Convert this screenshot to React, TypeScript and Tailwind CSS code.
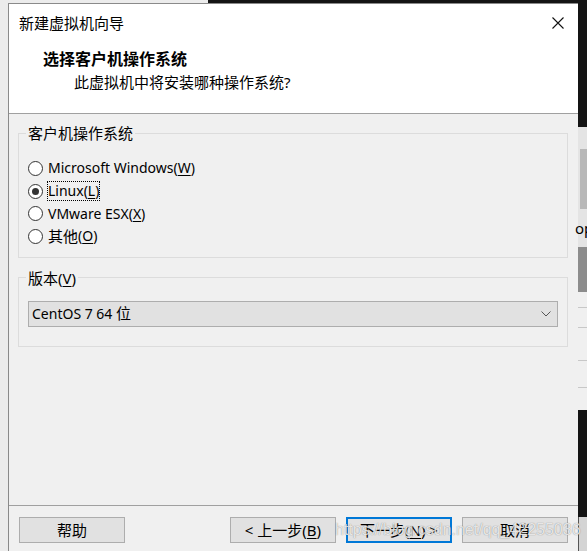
import type { ReactNode } from "react";

const FONT = "font-['Noto_Sans','Noto_Sans_CJK_SC',sans-serif]";

function Radio({
  checked,
  focused,
  children,
}: {
  checked?: boolean;
  focused?: boolean;
  children: ReactNode;
}) {
  return (
    <div className="flex h-[22.7px] items-center">
      <span className="ml-[9px] flex h-[15px] w-[15px] items-center justify-center rounded-full border border-[#333] bg-white">
        {checked && <span className="h-[7px] w-[7px] rounded-full bg-[#333]" />}
      </span>
      <span
        className={
          "ml-[4px] flex h-[20px] items-center border text-[14px] leading-[18px] text-black " +
          (focused ? "border-dotted border-black" : "border-transparent")
        }
      >
        {children}
      </span>
    </div>
  );
}

function Button({
  primary,
  children,
}: {
  primary?: boolean;
  children: ReactNode;
}) {
  return (
    <button
      className={
        "flex h-[26px] w-[106px] items-center justify-center bg-[#e1e1e1] text-[15px] leading-[18px] text-black " +
        (primary ? "border-2 border-[#0078d7]" : "border border-[#adadad]")
      }
    >
      {children}
    </button>
  );
}

export default function App() {
  return (
    <div className={`relative flex h-[551px] w-[587px] overflow-hidden bg-[#141414] ${FONT}`}>
      <div className="flex w-[578px] flex-col">
        {/* strip of the window behind */}
        <div className="flex h-[3px]">
          <div className="w-[208px] bg-[#ececec]" />
          <div className="flex-1 bg-[#141414]" />
        </div>

        <div className="flex flex-1">
          <div className="w-[8px] bg-[#ececec]" />

          {/* dialog */}
          <div className="flex flex-1 flex-col border-l border-t border-[#8a8a8a] bg-[#f0f0f0]">
            {/* header */}
            <div className="flex h-[110px] flex-col border-b border-[#a0a0a0] bg-white">
              <div className="flex h-[37px] items-center justify-between pl-[10px] pr-[14px]">
                <span className="text-[15px] leading-[20px] text-black">新建虚拟机向导</span>
                <svg width="12" height="12" viewBox="0 0 12 12">
                  <path d="M0.5 0.5 L11.5 11.5 M11.5 0.5 L0.5 11.5" stroke="#111" strokeWidth="1.1" />
                </svg>
              </div>
              <div className="mt-[8px] pl-[34px] text-[16px] font-bold leading-[20px] text-black">
                选择客户机操作系统
              </div>
              <div className="mt-[3px] pl-[65px] text-[15px] leading-[20px] text-black">
                此虚拟机中将安装哪种操作系统?
              </div>
            </div>

            {/* body */}
            <div className="flex flex-1 flex-col pl-[9px] pr-[10px]">
              <fieldset className="mt-[9px] border border-[#dcdcdc] pb-[9px] pt-[14px]">
                <legend className="ml-[7px] px-[2px] text-[15px] leading-[20px] text-black">
                  客户机操作系统
                </legend>
                <Radio>
                  Microsoft Windows(<u className="underline-offset-2">W</u>)
                </Radio>
                <Radio checked focused>
                  Linux(<u className="underline-offset-2">L</u>)
                </Radio>
                <Radio>
                  VMware ESX(<u className="underline-offset-2">X</u>)
                </Radio>
                <Radio>
                  <span className="text-[15px]">其他</span>(<u className="underline-offset-2">O</u>)
                </Radio>
              </fieldset>

              <fieldset className="mt-[10px] border border-[#dcdcdc] px-[9px] pb-[19px] pt-[13px]">
                <legend className="ml-[-2px] px-[2px] text-[15px] leading-[20px] text-black">
                  版本(<u className="underline-offset-2">V</u>)
                </legend>
                <div className="flex h-[26px] items-center justify-between border border-[#adadad] bg-[#e1e1e1] pl-[3px] pr-[6px]">
                  <span className="text-[14px] leading-[20px] text-black">
                    CentOS 7 64 <span className="text-[15px]">位</span>
                  </span>
                  <svg width="10" height="6" viewBox="0 0 10 6">
                    <polyline points="0.5,0.5 5,5 9.5,0.5" fill="none" stroke="#555" strokeWidth="1" />
                  </svg>
                </div>
              </fieldset>
            </div>

            {/* footer */}
            <div className="flex h-[46px] items-start border-t border-[#a0a0a0] px-[10px] pt-[11px]">
              <Button>帮助</Button>
              <div className="flex-1" />
              <Button>
                &lt; 上一步(<u className="underline-offset-2">B</u>)
              </Button>
              <div className="w-[10px]" />
              <Button primary>
                下一步(<u className="underline-offset-2">N</u>) &gt;
              </Button>
              <div className="w-[10px]" />
              <Button>取消</Button>
            </div>
          </div>
        </div>
      </div>

      {/* edge of the window behind */}
      <div className="flex w-[9px] flex-col">
        <div className="h-[127px] bg-[#141414]" />
        <div className="flex h-[120px] flex-col bg-[#e4e4e4]">
          <div className="ml-[2px] mt-[22px] h-[60px] w-[7px] bg-[#b8b8b8]" />
          <span className="ml-[-3px] mt-[10px] text-[15px] leading-[18px] text-black">op</span>
        </div>
        <div className="h-[45px] bg-[#8c8c8c]" />
        <div className="h-[15px] bg-[#f0f0f0]" />
        <div className="h-[20px] border-t border-[#c8c8c8] bg-[#f0f0f0]" />
        <div className="h-[33px] border-t border-[#c8c8c8] bg-[#f0f0f0]" />
        <div className="h-[27px] border-t border-[#c8c8c8] bg-[#f0f0f0]" />
        <div className="h-[23px] border-t border-[#c8c8c8] bg-[#f0f0f0]" />
        <div className="h-[107px] bg-[#141414]" />
        <div className="flex-1 border-l border-[#555] bg-[#d4d4d4]" />
      </div>

      {/* blog watermark */}
      <span className="pointer-events-none absolute left-[335px] top-[520px] font-['Liberation_Sans',sans-serif] text-[16px] leading-[20px] text-white/80 [text-shadow:0_0_1px_rgba(0,0,0,0.5)]">
        https://blog.csdn.net/qq_42255036
      </span>
    </div>
  );
}
